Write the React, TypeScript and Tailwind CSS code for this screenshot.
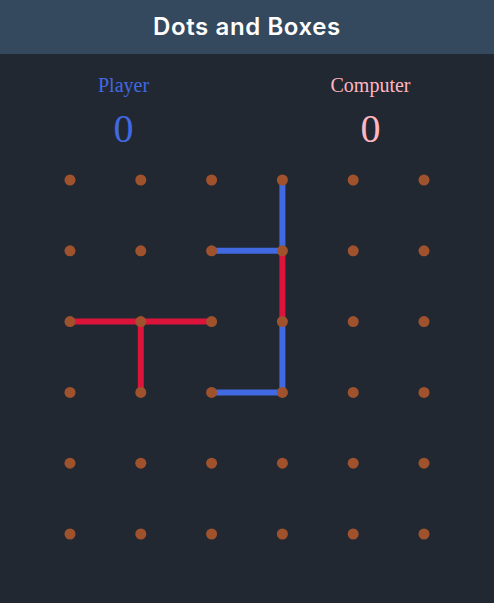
import React from 'react';

const SIZE = 6;
const GAP = 70.8;
const PAD = 20;

type Edge = { a: [number, number]; b: [number, number]; color: string };

const BLUE = '#4169e1';
const RED = '#dc143c';

// Moves played so far, as [col, row] pairs
const edges: Edge[] = [
  { a: [3, 0], b: [3, 1], color: BLUE },
  { a: [2, 1], b: [3, 1], color: BLUE },
  { a: [3, 1], b: [3, 2], color: RED },
  { a: [0, 2], b: [2, 2], color: RED },
  { a: [1, 2], b: [1, 3], color: RED },
  { a: [3, 2], b: [3, 3], color: BLUE },
  { a: [2, 3], b: [3, 3], color: BLUE },
];

const pos = (i: number) => PAD + i * GAP;

function Board() {
  const span = PAD * 2 + GAP * (SIZE - 1);
  return (
    <svg width={span} height={span} className="block">
      {edges.map((e, i) => (
        <line
          key={i}
          x1={pos(e.a[0])}
          y1={pos(e.a[1])}
          x2={pos(e.b[0])}
          y2={pos(e.b[1])}
          stroke={e.color}
          strokeWidth={6}
        />
      ))}
      {Array.from({ length: SIZE }).map((_, r) =>
        Array.from({ length: SIZE }).map((_, c) => (
          <circle key={`${r}-${c}`} cx={pos(c)} cy={pos(r)} r={5.5} fill="#a0522d" />
        ))
      )}
    </svg>
  );
}

export default function App() {
  return (
    <div className="min-h-screen bg-[#222831]">
      <header className="h-[54px] bg-[#34495e] flex items-center justify-center">
        <h1 className="text-white text-[24px] font-semibold font-['Inter',sans-serif] tracking-wide">
          Dots and Boxes
        </h1>
      </header>
      <div className="flex pt-[20px] font-['Liberation_Serif',serif]">
        <div className="flex-1 flex flex-col items-center text-[#4169e1]">
          <span className="text-[20px] leading-[23px]">Player</span>
          <span className="text-[40px] leading-[46px] mt-[9px]">0</span>
        </div>
        <div className="flex-1 flex flex-col items-center text-[#ffb6c1]">
          <span className="text-[20px] leading-[23px]">Computer</span>
          <span className="text-[40px] leading-[46px] mt-[9px]">0</span>
        </div>
      </div>
      <div className="flex justify-center mt-[8px]">
        <Board />
      </div>
    </div>
  );
}
